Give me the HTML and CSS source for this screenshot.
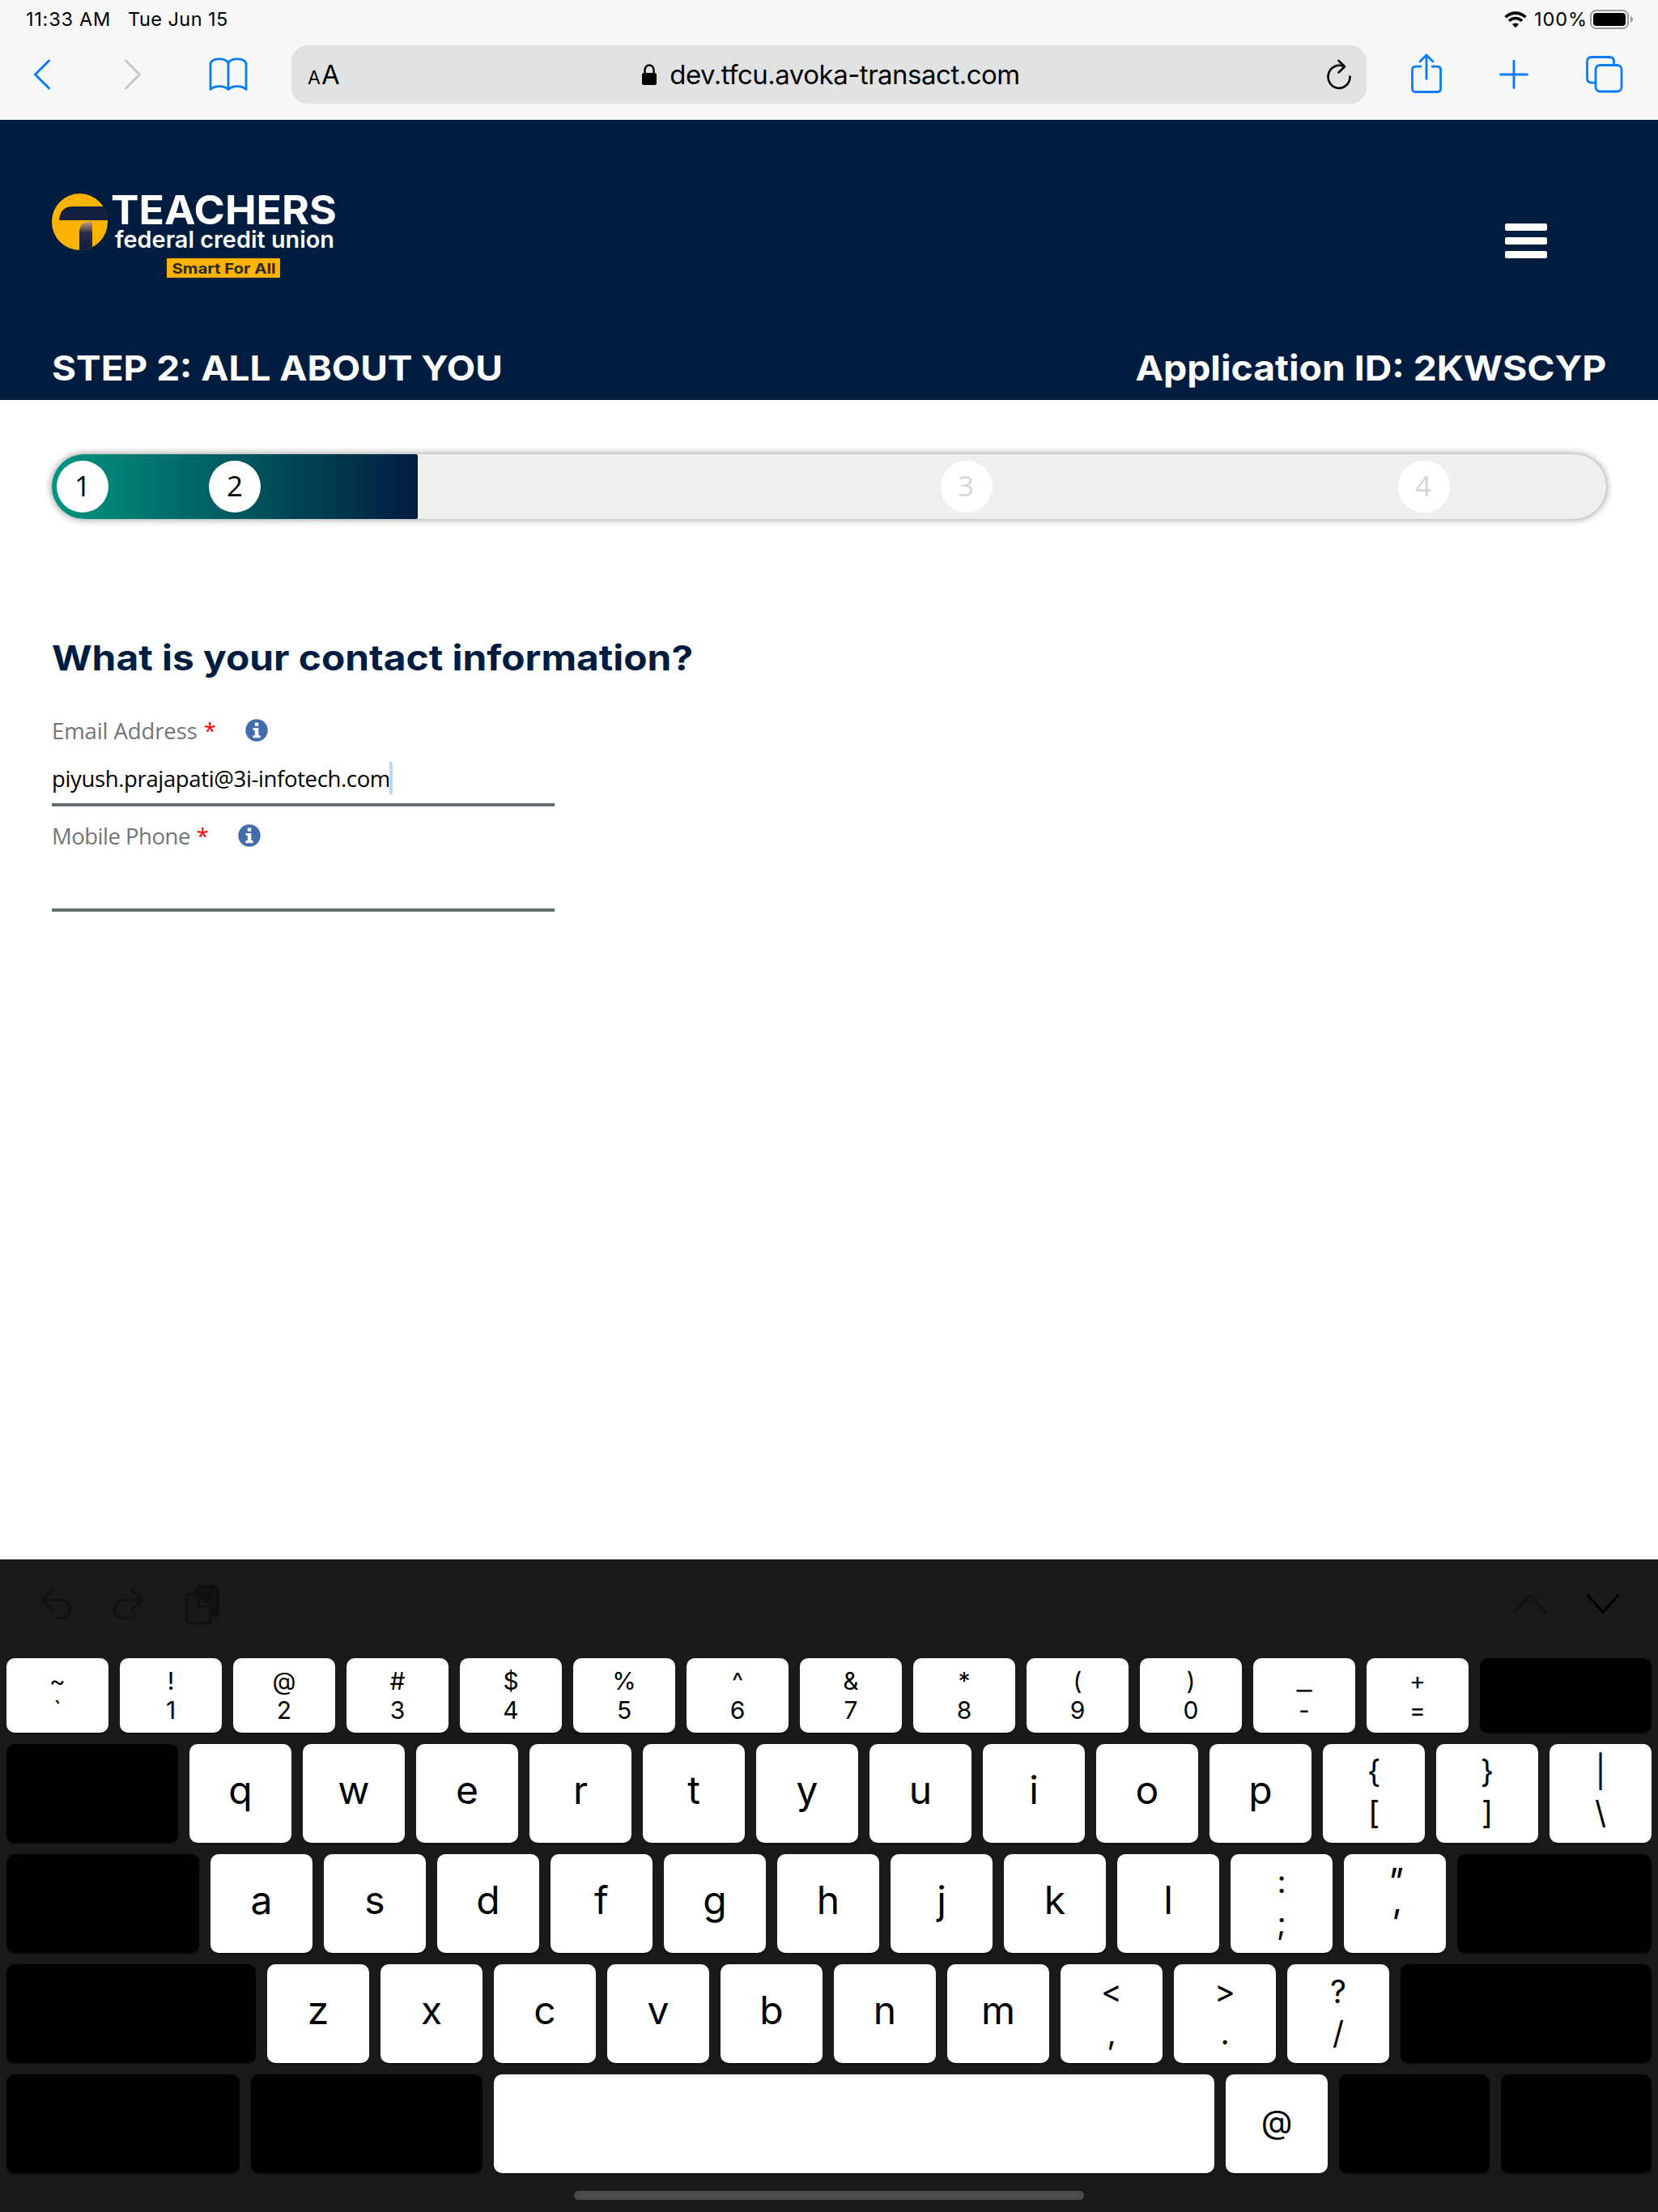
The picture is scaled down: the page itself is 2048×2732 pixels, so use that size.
FILE: index.html
```html
<!DOCTYPE html>
<html lang="en">
<head>
<meta charset="utf-8">
<title>Teachers Federal Credit Union</title>
<link rel="stylesheet" href="styles.css">
</head>
<body>
<div class="browser">
  <div class="status">
    <span class="time">11:33 AM</span>
    <span class="date">Tue Jun 15</span>
    <svg class="wifi" width="28" height="22" viewBox="0 0 28 22"><g fill="none" stroke="#000" stroke-width="3.6"><path d="M1.6 8.2a17.6 17.6 0 0 1 24.8 0"/><path d="M6 12.8a11.4 11.4 0 0 1 16 0"/></g><path d="M14 21.2l-4-4.2a5.8 5.8 0 0 1 8 0z"/></svg>
    <span class="percent">100%</span>
    <svg class="battery" width="54" height="24" viewBox="0 0 54 24"><rect x="1" y="1" width="46" height="22" rx="6.5" fill="none" stroke="#9a9a9a" stroke-width="2"/><rect x="4" y="4" width="40" height="16" rx="4"/><path d="M50 8c4 1.500 4 6.500 0 8z" fill="#9a9a9a"/></svg>
  </div>
  <div class="toolbar">
    <svg class="back" width="22" height="38" viewBox="0 0 22 38" fill="none" stroke="#087bf8" stroke-width="3" stroke-linecap="round" stroke-linejoin="round"><path d="M19.500 2L2.500 19l17 17"/></svg>
    <svg class="forward" width="22" height="38" viewBox="0 0 22 38" fill="none" stroke="#c7c7c8" stroke-width="3" stroke-linecap="round" stroke-linejoin="round"><path d="M2.500 2l17 17-17 17"/></svg>
    <svg class="book" width="48" height="42" viewBox="0 0 48 42" fill="none" stroke="#087bf8" stroke-width="2.800" stroke-linejoin="round"><path d="M24 39.500V7M24 7C21 .2 5 .2 2 7v32.500c5-5.300 17-5.300 22 0 5-5.300 17-5.300 22 0V7c-3-6.800-19-6.800-22 0"/></svg>
    <div class="address">
      <span class="textsize"><small>A</small>A</span>
      <div class="url">
        <svg width="18" height="26" viewBox="0 0 18 26"><rect y="11" width="18" height="15" rx="2.500"/><path d="M3.500 12V7.500a5.500 6 0 0 1 11 0V12" fill="none" stroke="#000" stroke-width="2.500"/></svg>
        <span>dev.tfcu.avoka-transact.com</span>
      </div>
      <svg class="reload" width="32" height="38" viewBox="0 0 32 38" fill="none" stroke="#000" stroke-width="2.600" stroke-linecap="round" stroke-linejoin="round"><path d="M29.500 21.500A13.500 14 0 1 1 22 9.300"/><path d="M15.500 2l7.500 7.200-7.500 7.300"/></svg>
    </div>
    <svg class="share" width="38" height="50" viewBox="0 0 38 50" fill="none" stroke="#087bf8" stroke-width="2.800" stroke-linecap="round" stroke-linejoin="round"><path stroke-linecap="butt" d="M13 16.200H5.500q-4 0-4 4V43.500q0 4 4 4h27q4 0 4-4V20.200q0-4-4-4H25"/><path d="M19 31.500V2M11 10l8-8 8 8"/></svg>
    <svg class="plus" width="36" height="36" viewBox="0 0 36 36" stroke="#087bf8" stroke-width="2.900" stroke-linecap="round"><path d="M18 1.500v33M1.500 18h33"/></svg>
    <svg class="tabs" width="46" height="46" viewBox="0 0 46 46" fill="none" stroke="#087bf8" stroke-width="2.800"><path d="M11.500 33.200H7q-5.500 0-5.500-5.500V7q0-5.500 5.500-5.500h22q5.500 0 5.500 5.500v4"/><rect x="12" y="11.500" width="32" height="32.500" rx="5.500"/></svg>
  </div>
</div>

<header class="site-header">
  <div class="brand-row">
    <svg class="logo" width="352" height="106" viewBox="0 0 352 106">
      <defs><linearGradient id="stem" x1="0" y1="0" x2="0" y2="1"><stop offset="0" stop-color="#d5a678"/><stop offset=".4" stop-color="#2a2b48"/><stop offset="1" stop-color="#0b1d40"/></linearGradient></defs>
      <ellipse cx="34.500" cy="35" rx="34.500" ry="35" fill="#fdb400"/>
      <path d="M9 33c1-11 6-17 17-17h38q5 8 5 17z" fill="#151f42"/>
      <path d="M34 70V48c0-9 5-14 16-14v32q-7 4-16 4z" fill="url(#stem)"/>
      <text class="logo-name" x="73" y="38" textLength="279" lengthAdjust="spacingAndGlyphs">TEACHERS</text>
      <text class="logo-sub" x="78" y="66.500" textLength="271" lengthAdjust="spacingAndGlyphs">federal credit union</text>
      <rect x="142" y="80" width="140" height="24" fill="#fdb400"/>
      <text class="logo-tag" x="148.500" y="99" textLength="128" lengthAdjust="spacingAndGlyphs">Smart For All</text>
    </svg>
    <div class="menu"><i></i><i></i><i></i></div>
  </div>
  <div class="title-row"><span class="step-title">STEP 2: ALL ABOUT YOU</span><span class="app-id">Application ID: 2KWSCYP</span></div>
</header>

<main class="content">
  <div class="progress">
    <div class="done"><b class="dot">1</b><b class="dot">2</b></div>
    <div class="todo"><b class="dot">3</b><b class="dot">4</b></div>
  </div>
  <h1>What is your contact information?</h1>
  <div class="field">
    <div class="label"><span class="email-label">Email Address</span><em>*</em>
      <svg width="28" height="28" viewBox="0 0 28 28"><circle cx="14" cy="14" r="13.700" fill="#416bab"/><path d="M11.800 4.500h4.500v4.300h-4.500zM9.500 11h6.900v9.300h2.200v3H9.400v-3h2.400V14H9.500z" fill="#fff"/></svg></div>
    <div class="input"><span class="value">piyush.prajapati@3i-infotech.com</span><i class="caret"></i></div>
  </div>
  <div class="field">
    <div class="label"><span class="phone-label">Mobile Phone</span><em>*</em>
      <svg width="28" height="28" viewBox="0 0 28 28"><circle cx="14" cy="14" r="13.700" fill="#416bab"/><path d="M11.800 4.500h4.500v4.300h-4.500zM9.500 11h6.900v9.300h2.200v3H9.400v-3h2.400V14H9.500z" fill="#fff"/></svg></div>
    <div class="input"></div>
  </div>
</main>

<section class="keyboard">
  <div class="shortcuts">
    <svg class="undo" width="38" height="38" viewBox="0 0 38 38" fill="none" stroke="#101010" stroke-width="2.600" stroke-linecap="round" stroke-linejoin="round"><path d="M15 2L2 14l13 12M2 14h22c16 0 16 22.500 1 22.500h-6"/></svg>
    <svg class="redo" width="38" height="38" viewBox="0 0 38 38" fill="none" stroke="#101010" stroke-width="2.600" stroke-linecap="round" stroke-linejoin="round"><path d="M23 2l13 12-13 12M36 14H14c-16 0-16 22.500-1 22.500h6"/></svg>
    <svg class="paste" width="42" height="50" viewBox="0 0 42 50"><path d="M11 10V6q0-5 5-5h20q5 0 5 5v29q0 5-5 5h-5V24z" fill="#101010"/><path d="M20 6.500h10" stroke="#191919" stroke-width="2"/><path d="M5 12h10l15 15v17q0 4-4 4H5q-4 0-4-4V16q0-4 4-4z" fill="#191919" stroke="#101010" stroke-width="2.600"/><path d="M14.500 12v15H30" fill="none" stroke="#101010" stroke-width="2.600"/></svg>
    <svg class="prev" width="42" height="26" viewBox="0 0 42 26" fill="none" stroke="#101010" stroke-width="2.600" stroke-linecap="round" stroke-linejoin="round"><path d="M2 23.500L21 2l19 21.500"/></svg>
    <svg class="next" width="42" height="26" viewBox="0 0 42 26" fill="none" stroke="#000" stroke-width="3" stroke-linecap="round" stroke-linejoin="round"><path d="M2 2l19 21.500L40 2"/></svg>
  </div>
  <div class="row numbers">
    <div class="key pair"><span>~</span><span>`</span></div>
    <div class="key pair"><span>!</span><span>1</span></div>
    <div class="key pair"><span>@</span><span>2</span></div>
    <div class="key pair"><span>#</span><span>3</span></div>
    <div class="key pair"><span>$</span><span>4</span></div>
    <div class="key pair"><span>%</span><span>5</span></div>
    <div class="key pair"><span>^</span><span>6</span></div>
    <div class="key pair"><span>&amp;</span><span>7</span></div>
    <div class="key pair"><span>*</span><span>8</span></div>
    <div class="key pair"><span>(</span><span>9</span></div>
    <div class="key pair"><span>)</span><span>0</span></div>
    <div class="key pair"><span class="wide">_</span><span>-</span></div>
    <div class="key pair"><span>+</span><span>=</span></div>
    <div class="key dark grow"></div>
  </div>
  <div class="row">
    <div class="key dark grow"></div>
    <div class="key">q</div><div class="key">w</div><div class="key">e</div><div class="key">r</div><div class="key">t</div>
    <div class="key">y</div><div class="key">u</div><div class="key">i</div><div class="key">o</div><div class="key">p</div>
    <div class="key pair"><span>{</span><span>[</span></div>
    <div class="key pair"><span>}</span><span>]</span></div>
    <div class="key pair"><span>|</span><span>\</span></div>
  </div>
  <div class="row">
    <div class="key dark caps"></div>
    <div class="key">a</div><div class="key">s</div><div class="key">d</div><div class="key">f</div><div class="key">g</div>
    <div class="key">h</div><div class="key">j</div><div class="key">k</div><div class="key">l</div>
    <div class="key pair"><span>:</span><span>;</span></div>
    <div class="key pair slanted"><span>"</span><span>'</span></div>
    <div class="key dark grow"></div>
  </div>
  <div class="row">
    <div class="key dark shift"></div>
    <div class="key">z</div><div class="key">x</div><div class="key">c</div><div class="key">v</div><div class="key">b</div><div class="key">n</div><div class="key">m</div>
    <div class="key pair"><span>&lt;</span><span>,</span></div>
    <div class="key pair"><span>&gt;</span><span>.</span></div>
    <div class="key pair"><span>?</span><span>/</span></div>
    <div class="key dark grow"></div>
  </div>
  <div class="row">
    <div class="key dark emoji"></div>
    <div class="key dark mode"></div>
    <div class="key grow"></div>
    <div class="key at">@</div>
    <div class="key dark side"></div>
    <div class="key dark side"></div>
  </div>
  <div class="home-bar"></div>
</section>
</body>
</html>
```
FILE: styles.css
```css
* { box-sizing: border-box; }
body { margin: 0; width: 2048px; height: 2732px; display: flex; flex-direction: column; background: #fff; color: #000; font-family: Inter, "Liberation Sans", sans-serif; overflow: hidden; }
svg { display: block; flex: none; }
span, h1 { white-space: nowrap; }

.browser { height: 148px; background: #f7f7f7; flex: none; }
.status { height: 48px; display: flex; align-items: center; padding: 0 30px 0 32px; font-size: 23.500px; line-height: 28px; }
.time { width: 126px; letter-spacing: .75px; margin-top: -1px; }
.date { letter-spacing: .45px; margin-top: -1px; }
.wifi { margin-left: auto; margin-right: 9px; }
.percent { width: 69px; letter-spacing: .9px; margin-top: -1px; }
.toolbar { display: flex; align-items: center; height: 88px; padding: 0 43px 0 41px; }
.forward { margin-left: 90px; }
.book { margin-left: 83px; }
.address { width: 1328px; height: 72px; margin-left: 54px; border-radius: 20px; background: #e1e3e2; display: flex; align-items: center; justify-content: space-between; padding: 0 18px 0 21px; }
.textsize { font-size: 33px; width: 60px; line-height: 40px; padding-top: 3px; margin-left: -1px; }
.textsize small { font-size: 23px; margin-right: 1px; }
.url { display: flex; align-items: center; gap: 16px; font-size: 33px; letter-spacing: -.5px; margin-right: 25px; }
.share { margin-left: 55px; margin-top: -3px; }
.plus { margin-left: 71px; }
.tabs { margin-left: 71px; }

.site-header { height: 346px; flex: none; background: #001d40; color: #fff; padding: 91px 64px 0; }
.brand-row { display: flex; justify-content: space-between; height: 187px; }
.logo { overflow: visible; }
.logo-name { font: 700 50px Inter, sans-serif; fill: #fff; }
.logo-sub { font: 600 28px Inter, sans-serif; fill: #fff; }
.logo-tag { font: 700 18px Inter, sans-serif; fill: #2b2a2a; }
.menu { width: 52px; margin: 37px 73px 0 0; display: flex; flex-direction: column; gap: 8px; }
.menu i { height: 9px; border-radius: 2px; background: #fff; }
.title-row { display: flex; justify-content: space-between; font-size: 43px; font-weight: 700; line-height: 56px; }
.step-title { transform: scaleX(1.067); transform-origin: left; }
.app-id { transform: scaleX(1.077); transform-origin: right; }

.content { padding: 67px 64px 0; flex: 1; }
.progress { height: 80px; display: flex; border-radius: 40px; background: #efefef; box-shadow: 0 0 9px 1px rgba(0, 0, 0, .38); font-family: "Open Sans", sans-serif; font-size: 35px; }
.done { width: 452px; border-radius: 40px 2px 2px 40px; background: linear-gradient(90deg, #009580, #001d40); display: flex; align-items: center; padding-left: 6px; gap: 124px; }
.todo { flex: 1; display: flex; align-items: center; color: #d5d5d5; padding-left: 646px; gap: 501px; }
.dot { width: 64px; height: 64px; border-radius: 50%; background: #fff; font-weight: 400; line-height: 62px; text-align: center; }
.todo .dot { padding-right: 2px; }
h1 { margin: 143px 0 0; color: #001d40; font-size: 43px; font-weight: 700; line-height: 56px; height: 94px; width: max-content; transform: scaleX(1.112); transform-origin: left; }
.field { width: 621px; height: 130px; font-family: "Open Sans", sans-serif; font-size: 27.500px; }
.label { height: 48px; display: flex; align-items: center; color: #747474; }
.label em { color: #f00; font-style: normal; margin: 0 38px 0 8px; width: 13px; }
.email-label { letter-spacing: -.1px; }
.phone-label { letter-spacing: -.5px; }
.input { height: 70px; padding-top: 15px; border-bottom: 4px solid #656e70; display: flex; }
.value { line-height: 42px; letter-spacing: -.36px; }
.caret { width: 4px; height: 40px; background: #b8d8ff; border-radius: 1px; margin-left: -1px; }

.keyboard { height: 806px; flex: none; background: #191919; padding: 0 8px; }
.shortcuts { height: 122px; display: flex; align-items: flex-start; padding: 36px 39px 0 42px; }
.redo { margin-left: 52px; }
.paste { margin: -5px 0 0 52px; }
.prev { margin: 6px 0 0 auto; }
.next { margin: 6px 0 0 48px; }
.row { display: flex; gap: 14px; height: 122px; margin-bottom: 14px; }
.key { width: 126px; flex: none; border-radius: 10px; background: #fff; box-shadow: 0 2px 0 #111; font-size: 48px; line-height: 113px; text-align: center; }
.pair { display: flex; flex-direction: column; padding-top: 8px; font-size: 39px; line-height: 51px; }
.numbers { height: 92px; }
.numbers .pair { padding-top: 10px; font-size: 30px; line-height: 36px; }
.wide { transform: scaleX(1.4); }
.slanted { font-size: 44px; }
.slanted span { transform: skewX(-12deg); }
.dark { background: #000; }
.grow { flex: 1; }
.caps { width: 238px; }
.shift { width: 308px; }
.emoji { width: 288px; }
.mode { width: 286px; }
.side { width: 186px; }
.at { font-size: 40px; line-height: 118px; }
.home-bar { width: 630px; height: 11px; margin: 22px auto 0; border-radius: 6px; background: #4c4c4c; }
```
